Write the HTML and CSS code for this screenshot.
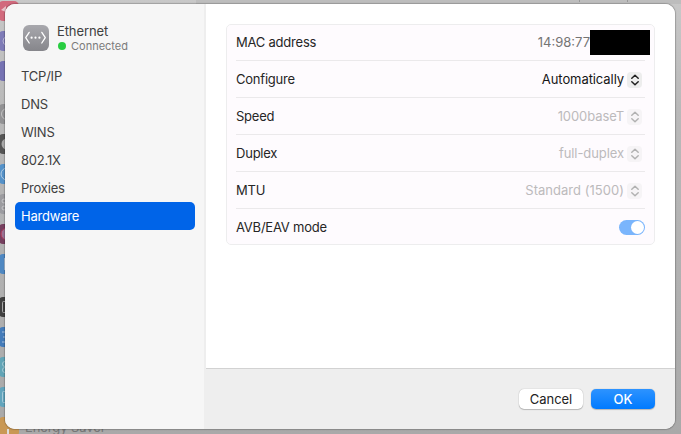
FILE: index.html
```html
<!DOCTYPE html>
<html lang="en">
<head>
<meta charset="utf-8">
<title>Ethernet</title>
<link rel="stylesheet" href="styles.css">
</head>
<body>
<svg class="backdrop" width="681" height="434" viewBox="0 0 681 434" aria-hidden="true">
  <defs><linearGradient id="shade" x2="0" y2="1"><stop stop-color="#c8c8c8"/><stop offset=".25" stop-color="#b9b9b9"/><stop offset="1" stop-color="#a9a9a9"/></linearGradient></defs>
  <rect width="681" height="434" fill="url(#shade)"/>
  <rect x="196" width="485" height="4" fill="#bdbdbd"/>
  <path d="M579.5 0v2M627.500 0v2" stroke="#999"/>
  <rect x="-2" y="1" width="21" height="20" rx="5" fill="#d26a7d"/><path d="M1 10l5-4v6" fill="#eac4ca"/>
  <rect x="-2" y="31" width="20" height="20" rx="5" fill="#7f7cb8"/><circle cx="7" cy="41" r="4" fill="none" stroke="#bbb8d8"/>
  <rect x="-2" y="61" width="20" height="20" rx="5" fill="#7673b3"/>
  <rect x="-2" y="104" width="20" height="20" rx="5" fill="#929294"/><circle cx="7" cy="114" r="5.500" fill="none" stroke="#c2c2c2"/>
  <rect x="-2" y="134" width="20" height="20" rx="5" fill="#555"/><circle cx="7" cy="144" r="5.500" fill="#aaa"/>
  <rect x="-2" y="164" width="20" height="20" rx="5" fill="#5592c9"/><circle cx="7" cy="174" r="6" fill="none" stroke="#b3cde4"/>
  <rect x="-2" y="194" width="20" height="20" rx="5" fill="#9c9ca0"/><circle cx="4" cy="201" r="2" fill="none" stroke="#c5c5c8"/><circle cx="4" cy="208" r="2" fill="none" stroke="#c5c5c8"/>
  <rect x="-2" y="224" width="20" height="20" rx="5" fill="#76405f"/><circle cx="7" cy="234" r="6" fill="#9b7394" stroke="#b23a5a"/>
  <rect x="-2" y="254" width="20" height="20" rx="5" fill="#4f88c2"/><path d="M4.500 258v12" stroke="#b2c7df"/>
  <rect x="-2" y="297" width="20" height="20" rx="5" fill="#414141"/><rect x="2.500" y="301.500" width="9" height="11" rx="1" fill="none" stroke="#aaa"/>
  <rect x="-2" y="327" width="20" height="20" rx="5" fill="#447cba"/><path d="M2 332h3M3 337h3M2 342h3" stroke="#a7bfdb"/>
  <rect x="-2" y="357" width="20" height="20" rx="5" fill="#62a5b7"/><circle cx="5" cy="364" r="2.500" fill="none" stroke="#a5cad3"/><circle cx="5" cy="370" r="2.500" fill="none" stroke="#a5cad3"/>
  <rect x="-2" y="387" width="20" height="20" rx="5" fill="#62a5bd"/><rect x="2.500" y="391.500" width="8" height="11" rx="1" fill="none" stroke="#a5cad8"/>
  <rect x="-2" y="417" width="21" height="20" rx="5" fill="#c99855"/><path d="M7 434v-5h2v5" fill="#ddd"/>
  <text class="backdrop-label" x="25" y="432">Energy Saver</text>
</svg>
<main class="sheet">
  <aside class="sidebar">
    <header class="service">
      <svg class="service-icon" width="27" height="27" viewBox="0 0 27 27">
        <defs><linearGradient id="gray" x2="0" y2="1"><stop stop-color="#a8a8ad"/><stop offset="1" stop-color="#86868b"/></linearGradient></defs>
        <rect x="1" y="1" width="26" height="26" rx="6" fill="url(#gray)"/>
        <path d="M7.200 8.400L3.700 13.700l3.500 5.300M19.800 8.400l3.500 5.300-3.500 5.300" fill="none" stroke="#fff" stroke-width="1.300" stroke-linecap="round" stroke-linejoin="round"/>
        <g fill="#fff"><circle cx="9.600" cy="13.700" r="1.100"/><circle cx="13.500" cy="13.700" r="1.100"/><circle cx="17.400" cy="13.700" r="1.100"/></g>
      </svg>
      <div>
        <div class="service-name">Ethernet</div>
        <div class="status"><span class="dot"></span>Connected</div>
      </div>
    </header>
    <nav class="tabs">
      <a class="tab">TCP/IP</a>
      <a class="tab">DNS</a>
      <a class="tab">WINS</a>
      <a class="tab">802.1X</a>
      <a class="tab">Proxies</a>
      <a class="tab selected">Hardware</a>
    </nav>
  </aside>
  <section class="content">
    <div class="pane">
      <div class="card">
        <div class="row"><span>MAC address</span><span class="mac">14:98:77<span class="redacted"></span></span></div>
        <div class="row"><span>Configure</span><span class="popup"><span class="auto">Automatically</span><span class="stepper"><svg width="10" height="12" viewBox="0 0 10 12"><path d="M1.800 4.300L5 1.300l3.200 3M1.800 7.700L5 10.700l3.200-3"/></svg></span></span></div>
        <div class="row"><span>Speed</span><span class="popup disabled">1000baseT<span class="stepper"><svg width="10" height="12" viewBox="0 0 10 12"><path d="M1.800 4.300L5 1.300l3.200 3M1.800 7.700L5 10.700l3.200-3"/></svg></span></span></div>
        <div class="row"><span>Duplex</span><span class="popup disabled">full-duplex<span class="stepper"><svg width="10" height="12" viewBox="0 0 10 12"><path d="M1.800 4.300L5 1.300l3.200 3M1.800 7.700L5 10.700l3.200-3"/></svg></span></span></div>
        <div class="row"><span>MTU</span><span class="popup disabled wide">Standard (1500)<span class="stepper"><svg width="10" height="12" viewBox="0 0 10 12"><path d="M1.800 4.300L5 1.300l3.200 3M1.800 7.700L5 10.700l3.200-3"/></svg></span></span></div>
        <div class="row"><span>AVB/EAV mode</span><span class="switch"><span class="knob"></span></span></div>
      </div>
    </div>
    <footer class="actions">
      <button class="button">Cancel</button>
      <button class="button primary">OK</button>
    </footer>
  </section>
</main>
</body>
</html>
```
FILE: styles.css
```css
* { box-sizing: border-box; }
body {
  margin: 0;
  width: 681px;
  height: 434px;
  padding: 4px 6px 5px 5px;
  overflow: hidden;
  font: 13px/16px Inter, "Liberation Sans", sans-serif;
  letter-spacing: -.22px;
  color: #262626;
}
.backdrop { position: absolute; left: 0; top: 0; }
.backdrop-label { font-size: 13px; fill: #777; letter-spacing: -.1px; }
.sheet {
  position: relative;
  display: flex;
  width: 670px;
  height: 425px;
  border-radius: 10px;
  overflow: hidden;
  background: #fff;
  box-shadow: 0 0 1px 1px rgba(0, 0, 0, .2);
}
.sidebar {
  width: 199px;
  padding: 20px 9px 0 10px;
  background: #f6f6f6;
  color: #404040;
}
.service { display: flex; gap: 8px; padding-left: 7px; height: 38px; }
.service-name { margin-top: -1px; height: 16px; letter-spacing: -.1px; }
.status {
  display: flex;
  align-items: center;
  gap: 5px;
  height: 14px;
  font-size: 11px;
  letter-spacing: 0;
  color: #7b7b7b;
}
.dot { width: 8px; height: 8px; margin-left: 1px; border-radius: 50%; background: #28cd41; }
.tab {
  display: flex;
  align-items: center;
  height: 28px;
  padding-left: 6px;
  border-radius: 5px;
}
.selected { background: #0064e8; color: #fff; }
.content {
  display: flex;
  flex-direction: column;
  width: 471px;
  background: #eee;
}
.pane {
  height: 364px;
  margin-left: 2px;
  padding: 20px;
  background: #fff;
}
.card {
  width: 429px;
  height: 221px;
  padding: 0 9px;
  border: 1px solid #ededee;
  border-radius: 5px;
  background: #fefbfe;
}
.row {
  display: flex;
  align-items: center;
  justify-content: space-between;
  height: 37px;
  border-bottom: 1px solid #ebe9eb;
}
.row:first-child { height: 36px; padding-bottom: 1px; }
.row:last-child { height: 36px; border-bottom: 0; }
.mac { display: flex; align-items: center; margin-right: -5px; color: #747474; letter-spacing: 0; }
.redacted { width: 60px; height: 25px; margin-top: 1px; background: #000; }
.popup { display: flex; align-items: center; gap: 3px; margin-right: 3px; letter-spacing: -.08px; }
.wide { letter-spacing: .03px; }
.auto { color: #161616; }
.stepper {
  display: flex;
  align-items: center;
  justify-content: center;
  width: 15px;
  height: 16px;
  margin-top: 2px;
  border-radius: 4px;
  background: #ededed;
}
.stepper path {
  fill: none;
  stroke: #222;
  stroke-width: 1.5;
  stroke-linecap: round;
  stroke-linejoin: round;
}
.disabled { color: #bcbabc; }
.disabled .stepper { background: #f6f4f6; }
.disabled .stepper path { stroke: #b2b2b2; }
.switch {
  display: flex;
  justify-content: flex-end;
  width: 26px;
  height: 15px;
  margin-top: 1px;
  padding: 1px;
  border-radius: 8px;
  background: #7ab5fc;
}
.knob { width: 13px; height: 13px; border-radius: 50%; background: #fff; }
.actions {
  display: flex;
  gap: 8px;
  height: 61px;
  margin-left: 2px;
  padding: 20px 20px 0 0;
  justify-content: flex-end;
  border-top: 1px solid #d2d2d2;
}
.button {
  width: 64px;
  height: 20px;
  padding: 0;
  border: 0;
  border-radius: 5px;
  background: #fff;
  box-shadow: 0 0 1px rgba(0, 0, 0, .35), 0 1px 1px rgba(0, 0, 0, .2);
  font: inherit;
  letter-spacing: -.05px;
  color: #222;
}
.primary {
  background: linear-gradient(#2d93ff, #007aff);
  color: #fff;
  font-weight: 500;
}
```
